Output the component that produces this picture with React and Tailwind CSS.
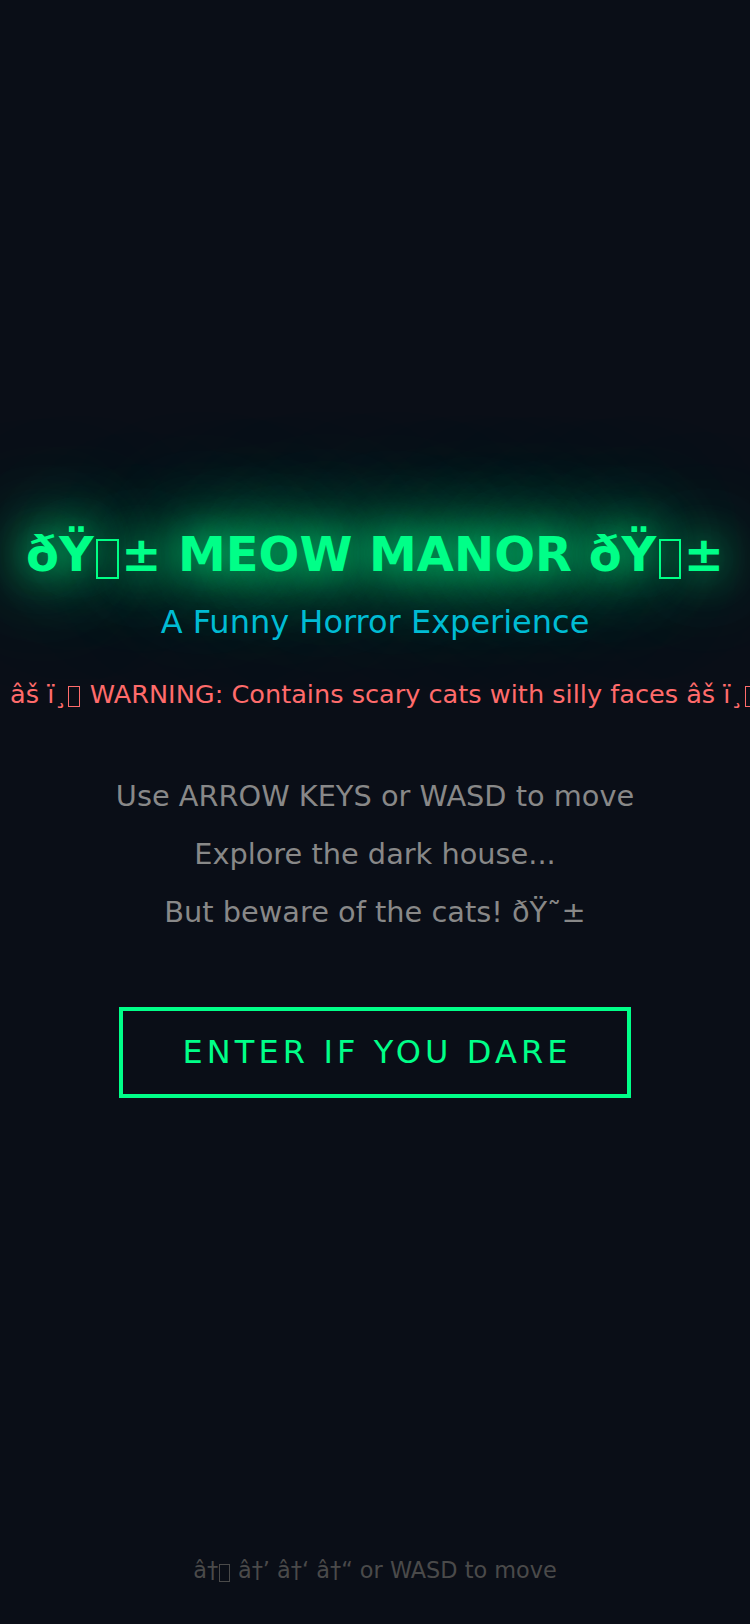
import React from "react";

// missing-glyph box, as the browser draws it for the broken characters
const Tofu = ({ className = "" }) => (
  <span
    className={`mx-[0.05em] inline-block h-[0.83em] w-[0.47em] align-[-0.17em] ${className}`}
  />
);

const App = () => {
  return (
    <div className="relative min-h-[1624px] w-full overflow-hidden bg-[#0a0e17] font-['DejaVu_Sans',sans-serif]">
      <div className="flex min-h-[1624px] flex-col justify-center px-[10px] text-center">
        {/* Title */}
        <h1 className="whitespace-nowrap text-[48px] font-bold leading-[56px] text-[#00ff88] [text-shadow:0_0_40px_#00ff88,0_0_80px_#00ff88,0_0_120px_#00ff88]">
          {"\u00f0\u0178"}
          <Tofu className="border-2 border-[#00ff88]" />
          {"\u00b1 MEOW MANOR \u00f0\u0178"}
          <Tofu className="border-2 border-[#00ff88]" />
          {"\u00b1"}
        </h1>
        <p className="mt-[22px] text-[32px] leading-[37px] text-[#00bcd4]">
          A Funny Horror Experience
        </p>
        <p className="mt-[38px] whitespace-nowrap text-[25.6px] leading-[30px] text-[#ff6b6b]">
          {"\u00e2\u0161\u00a0\u00ef\u00b8"}
          <Tofu className="border border-[#ff6b6b]" />
          {" WARNING: Contains scary cats with silly faces \u00e2\u0161\u00a0\u00ef\u00b8"}
          <Tofu className="border border-[#ff6b6b]" />
        </p>

        {/* Instructions */}
        <div className="mt-[70px] flex flex-col gap-[24px] text-[28.8px] leading-[34px] text-[#888888]">
          <p>Use ARROW KEYS or WASD to move</p>
          <p>Explore the dark house...</p>
          <p>But beware of the cats! {"\u00f0\u0178\u02dc\u00b1"}</p>
        </div>

        <div className="mt-[78px] flex justify-center">
          <button className="w-[512px] border-4 border-[#00ff88] bg-transparent py-[23px] pl-[4.1px] text-[32px] leading-[37px] tracking-[4.1px] text-[#00ff88]">
            ENTER IF YOU DARE
          </button>
        </div>
      </div>

      {/* Controls hint */}
      <p className="absolute bottom-[36px] left-0 right-0 text-center text-[22.4px] text-[#4a4a4a]">
        {"\u00e2\u2020"}
        <Tofu className="border border-[#4a4a4a]" />
        {" \u00e2\u2020\u2019 \u00e2\u2020\u2018 \u00e2\u2020\u201c or WASD to move"}
      </p>
    </div>
  );
};

export default App;
